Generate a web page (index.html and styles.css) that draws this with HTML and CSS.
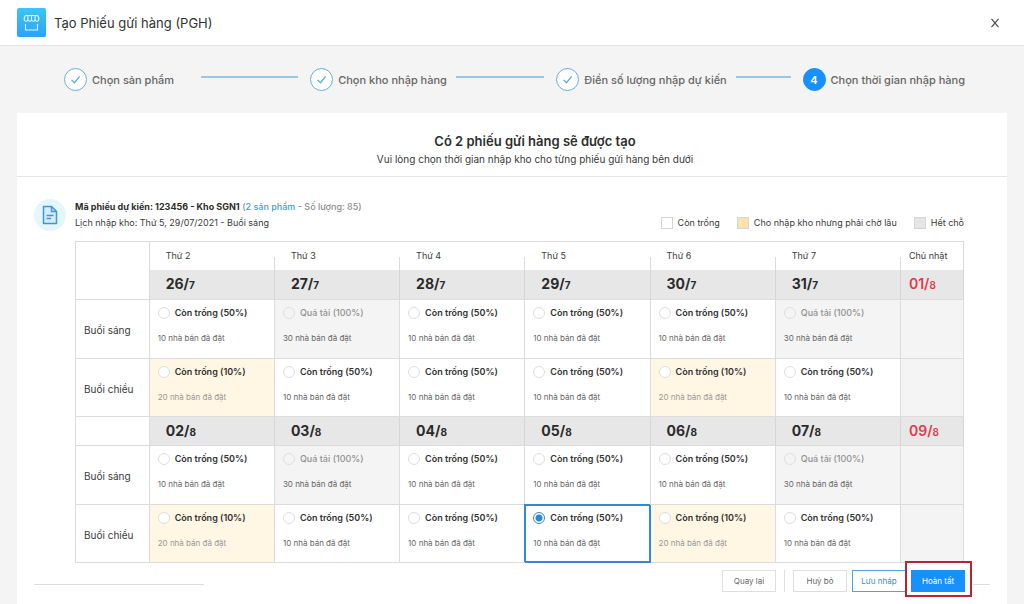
FILE: index.html
```html
<!DOCTYPE html>
<html lang="vi">
<head>
<meta charset="utf-8">
<meta name="viewport" content="width=device-width, initial-scale=1">
<title>Tạo Phiếu gửi hàng (PGH)</title>
<link rel="stylesheet" href="styles.css">
</head>
<body>
<header class="topbar">
  <svg class="logo" viewBox="0 0 29 29" aria-hidden="true">
    <defs><linearGradient id="logo-fill" x1="0" y1="0" x2="0" y2="1"><stop offset="0" stop-color="#3cc4f8"/><stop offset="1" stop-color="#2aa4f6"/></linearGradient></defs>
    <rect width="29" height="29" rx="2" fill="url(#logo-fill)"/>
    <g fill="none" stroke="#e4f8ff" stroke-width="1.1" stroke-linejoin="round">
      <path d="M8.400 7.500h12.200l1.200 2.500v1.600a1.850 2 0 0 1-3.650 0v-4M18.150 11.600a1.850 2 0 0 1-3.650 0v-4M14.500 11.600a1.850 2 0 0 1-3.650 0v-4M10.850 11.600a1.850 2 0 0 1-3.650 0v-1.600l1.200-2.500"/>
      <path d="M8.500 16v6h12v-6"/>
    </g>
  </svg>
  <h1 class="topbar-title">Tạo Phiếu gửi hàng (PGH)</h1>
  <button class="close" type="button" aria-label="Đóng">
    <svg viewBox="0 0 10 10" aria-hidden="true"><path d="M1.500 .8l7 8.400M8.500 .8l-7 8.400" fill="none" stroke="#444" stroke-width="1.100"/></svg>
  </button>
</header>

<ol class="steps">
  <li class="step step-first"><span class="step-mark"><svg viewBox="0 0 24 24"><path d="M7.500 12.400l3.300 3.300 6-7.200"/></svg></span><span>Chọn sản phẩm</span><i class="step-line"></i></li>
  <li class="step"><span class="step-mark"><svg viewBox="0 0 24 24"><path d="M7.500 12.400l3.300 3.300 6-7.200"/></svg></span><span>Chọn kho nhập hàng</span><i class="step-line"></i></li>
  <li class="step"><span class="step-mark"><svg viewBox="0 0 24 24"><path d="M7.500 12.400l3.300 3.300 6-7.200"/></svg></span><span>Điền số lượng nhập dự kiến</span><i class="step-line"></i></li>
  <li class="step step-current"><span class="step-mark">4</span><span>Chọn thời gian nhập hàng</span></li>
</ol>

<main class="card">
  <div class="card-head">
    <h2>Có 2 phiếu gửi hàng sẽ được tạo</h2>
    <p>Vui lòng chọn thời gian nhập kho cho từng phiếu gửi hàng bên dưới</p>
  </div>

  <section class="ticket">
    <div class="ticket-icon">
      <svg viewBox="0 0 16 20" aria-hidden="true"><g fill="none" stroke="#3d97dc" stroke-width="1.5" stroke-linejoin="round"><path d="M1.500 1.500h8l5 5v12h-13z" fill="#d3edfc"/><path d="M9.500 1.500v5h5M4.500 10.500h7M4.500 13.500h4.500"/></g></svg>
    </div>
    <div class="ticket-body">
      <div class="ticket-info">
        <div>
          <p><strong>Mã phiếu dự kiến: 123456 - Kho SGN1</strong> <span class="qty">(<a href="#">2 sản phẩm</a> - Số lượng: 85)</span></p>
          <p>Lịch nhập kho: Thứ 5, 29/07/2021 - Buổi sáng</p>
        </div>
        <ul class="legend">
          <li><i class="swatch"></i>Còn trống</li>
          <li><i class="swatch swatch-wait"></i>Cho nhập kho nhưng phải chờ lâu</li>
          <li><i class="swatch swatch-full"></i>Hết chỗ</li>
        </ul>
      </div>

      <table class="calendar">
        <colgroup><col class="col-label"><col span="6"><col class="col-sunday"></colgroup>
        <thead>
          <tr class="weekdays"><td rowspan="2"></td><th>Thứ 2</th><th>Thứ 3</th><th>Thứ 4</th><th>Thứ 5</th><th>Thứ 6</th><th>Thứ 7</th><th>Chủ nhật</th></tr>
          <tr class="dates"><th>26/<small>7</small></th><th>27/<small>7</small></th><th>28/<small>7</small></th><th>29/<small>7</small></th><th>30/<small>7</small></th><th>31/<small>7</small></th><th class="sunday">01/<small>8</small></th></tr>
        </thead>
        <tbody>
          <tr class="slots">
            <th>Buổi sáng</th>
            <td><label><input type="radio" name="slot"><b>Còn trống (50%)</b><span>10 nhà bán đã đặt</span></label></td>
            <td class="full"><label><input type="radio" name="slot" disabled><b>Quá tải (100%)</b><span>30 nhà bán đã đặt</span></label></td>
            <td><label><input type="radio" name="slot"><b>Còn trống (50%)</b><span>10 nhà bán đã đặt</span></label></td>
            <td><label><input type="radio" name="slot"><b>Còn trống (50%)</b><span>10 nhà bán đã đặt</span></label></td>
            <td><label><input type="radio" name="slot"><b>Còn trống (50%)</b><span>10 nhà bán đã đặt</span></label></td>
            <td class="full"><label><input type="radio" name="slot" disabled><b>Quá tải (100%)</b><span>30 nhà bán đã đặt</span></label></td>
            <td class="full"></td>
          </tr>
          <tr class="slots">
            <th>Buổi chiều</th>
            <td class="wait"><label><input type="radio" name="slot"><b>Còn trống (10%)</b><span>20 nhà bán đã đặt</span></label></td>
            <td><label><input type="radio" name="slot"><b>Còn trống (50%)</b><span>10 nhà bán đã đặt</span></label></td>
            <td><label><input type="radio" name="slot"><b>Còn trống (50%)</b><span>10 nhà bán đã đặt</span></label></td>
            <td><label><input type="radio" name="slot"><b>Còn trống (50%)</b><span>10 nhà bán đã đặt</span></label></td>
            <td class="wait"><label><input type="radio" name="slot"><b>Còn trống (10%)</b><span>20 nhà bán đã đặt</span></label></td>
            <td><label><input type="radio" name="slot"><b>Còn trống (50%)</b><span>10 nhà bán đã đặt</span></label></td>
            <td class="full"></td>
          </tr>
          <tr class="dates"><td></td><th>02/<small>8</small></th><th>03/<small>8</small></th><th>04/<small>8</small></th><th>05/<small>8</small></th><th>06/<small>8</small></th><th>07/<small>8</small></th><th class="sunday">09/<small>8</small></th></tr>
          <tr class="slots">
            <th>Buổi sáng</th>
            <td><label><input type="radio" name="slot"><b>Còn trống (50%)</b><span>10 nhà bán đã đặt</span></label></td>
            <td class="full"><label><input type="radio" name="slot" disabled><b>Quá tải (100%)</b><span>30 nhà bán đã đặt</span></label></td>
            <td><label><input type="radio" name="slot"><b>Còn trống (50%)</b><span>10 nhà bán đã đặt</span></label></td>
            <td><label><input type="radio" name="slot"><b>Còn trống (50%)</b><span>10 nhà bán đã đặt</span></label></td>
            <td><label><input type="radio" name="slot"><b>Còn trống (50%)</b><span>10 nhà bán đã đặt</span></label></td>
            <td class="full"><label><input type="radio" name="slot" disabled><b>Quá tải (100%)</b><span>30 nhà bán đã đặt</span></label></td>
            <td class="full"></td>
          </tr>
          <tr class="slots">
            <th>Buổi chiều</th>
            <td class="wait"><label><input type="radio" name="slot"><b>Còn trống (10%)</b><span>20 nhà bán đã đặt</span></label></td>
            <td><label><input type="radio" name="slot"><b>Còn trống (50%)</b><span>10 nhà bán đã đặt</span></label></td>
            <td><label><input type="radio" name="slot"><b>Còn trống (50%)</b><span>10 nhà bán đã đặt</span></label></td>
            <td class="selected"><label><input type="radio" name="slot" checked><b>Còn trống (50%)</b><span>10 nhà bán đã đặt</span></label></td>
            <td class="wait"><label><input type="radio" name="slot"><b>Còn trống (10%)</b><span>20 nhà bán đã đặt</span></label></td>
            <td><label><input type="radio" name="slot"><b>Còn trống (50%)</b><span>10 nhà bán đã đặt</span></label></td>
            <td class="full"></td>
          </tr>
        </tbody>
      </table>
    </div>
  </section>

  <footer class="actions">
    <i class="rule rule-left"></i>
    <button class="btn" type="button">Quay lại</button>
    <i class="divider"></i>
    <button class="btn" type="button">Huỷ bỏ</button>
    <button class="btn btn-outline" type="button">Lưu nháp</button>
    <span class="highlight"><button class="btn btn-primary" type="button">Hoàn tất</button></span>
    <i class="rule rule-right"></i>
  </footer>
</main>
</body>
</html>
```
FILE: styles.css
```css
* { box-sizing: border-box; }

body {
  margin: 0;
  min-height: 100vh;
  display: flex;
  flex-direction: column;
  background: #f4f4f4;
  color: #3a3a3a;
  font-family: Inter, "Liberation Sans", sans-serif;
  font-size: 9px;
  line-height: 16px;
}

h1, h2, p, ol, ul { margin: 0; padding: 0; }
ol, ul { list-style: none; }
button, input { font: inherit; margin: 0; }
svg { display: block; }

.topbar {
  display: flex;
  align-items: center;
  gap: 8px;
  height: 46px;
  padding: 0 24px 0 17px;
  background: #fff;
  border-bottom: 1px solid #e4e4e4;
}
.logo { width: 29px; height: 29px; }
.topbar-title { flex: 1; font-size: 13px; font-weight: 400; color: #333; }
.close { padding: 0; border: 0; background: none; cursor: pointer; }
.close svg { width: 10px; height: 10px; }

.steps {
  display: flex;
  height: 67px;
  padding: 0 59px 0 64px;
  align-items: center;
}
.step {
  flex: 1;
  display: flex;
  align-items: center;
  gap: 5px;
  font-size: 11px;
  font-weight: 500;
  color: #666;
  white-space: nowrap;
}
.step-current { flex: none; }
.step-mark {
  flex: none;
  display: grid;
  place-items: center;
  width: 23px;
  height: 23px;
  border: 1px solid #69aedb;
  border-radius: 50%;
  background: #fff;
}
.step-mark svg { width: 21px; height: 21px; fill: none; stroke: #5fa9da; stroke-width: 1.5; }
.step-current .step-mark { background: #1890ff; border-color: #1890ff; color: #fff; font-weight: 600; }
.step-line { flex: 1; height: 2px; margin: 0 12px 5px 4px; background: #98c8e4; }
.step-first .step-line { margin-left: 22px; }

.card {
  flex: 1;
  margin: 0 17px;
  background: #fff;
}
.card-head {
  height: 64px;
  padding: 19px 0 0 46px;
  border-bottom: 1px solid #e6e6e6;
  text-align: center;
}
.card-head h2 { font-size: 13px; line-height: 18px; font-weight: 600; color: #2d2d2d; }
.card-head p { font-size: 10px; line-height: 18px; }

.ticket { display: flex; gap: 9px; padding: 22px 43px 0 17px; }
.ticket-icon {
  flex: none;
  display: grid;
  place-items: center;
  width: 32px;
  height: 32px;
  border-radius: 50%;
  background: #e5f6fe;
}
.ticket-icon svg { width: 16px; height: 20px; }
.ticket-body { flex: 1; }
.ticket-info {
  display: flex;
  justify-content: space-between;
  align-items: flex-end;
  height: 32px;
}
.ticket-info strong { font-weight: 700; color: #2d2d2d; }
.qty { color: #8c8c8c; font-weight: 500; }
.qty a { color: #3d9be0; text-decoration: none; }
.legend { display: flex; gap: 17px; }
.legend li { display: flex; align-items: center; gap: 5px; }
.swatch { width: 12px; height: 12px; border: 1px solid #d5d5d5; background: #fff; }
.swatch-wait { background: #fde2ae; }
.swatch-full { background: #e5e5e5; }

.calendar {
  width: 100%;
  margin-top: 10px;
  table-layout: fixed;
  border-spacing: 0;
  border: 1px solid #dcdcdc;
  border-width: 1px 0 0 1px;
}
.col-label { width: 8.3%; }
.col-sunday { width: 7.1%; }
.calendar th, .calendar td {
  padding: 0;
  border: 1px solid #dcdcdc;
  border-width: 0 1px 1px 0;
  text-align: left;
  font-weight: 400;
}
.calendar .weekdays th {
  height: 28px;
  padding-left: 16px;
  border-width: 0;
  background: linear-gradient(#dcdcdc, #dcdcdc) right bottom / 1px 13px no-repeat;
}
.calendar .weekdays th:last-child { background-size: 1px 28px; }
.calendar .dates th {
  height: 30px;
  padding-left: 16px;
  background: #e7e7e7;
  border-right-color: #d6d6d6;
  font-size: 14px;
  font-weight: 700;
  color: #2b2b2b;
}
.calendar tbody .dates th { height: 29px; }
.dates small { font-size: 10px; }
.calendar .weekdays th:last-child, .calendar .dates .sunday { padding-left: 8px; }
.calendar .dates .sunday { color: #e23b48; font-weight: 600; }
.calendar .slots > * { height: 58px; }
.calendar .slots:first-child > *, .calendar .dates + .slots > * { height: 59px; }
.calendar .slots th { padding: 2px 0 0 8px; font-size: 10px; }
.calendar .slots td { padding: 5px 8px; vertical-align: top; }
.calendar .full { background: #f4f4f4; }
.calendar .wait { background: #fff6e3; }
.calendar .selected { box-shadow: -1px -1px 0 #3389d4, inset 0 0 0 1px #3389d4; border-color: #3389d4; }

.slots label {
  display: grid;
  grid-template-columns: 12px 1fr;
  column-gap: 5px;
  row-gap: 9px;
  align-items: center;
  white-space: nowrap;
}
.slots b { font-weight: 600; color: #333; }
.slots span { grid-column: 1 / -1; font-size: 8px; color: #666; }
.slots .wait span { color: #999; }
.slots .full b { font-weight: 500; color: #929292; }
.slots input {
  appearance: none;
  width: 12px;
  height: 12px;
  border: 1px solid #dedede;
  border-radius: 50%;
  background: #fff;
}
.slots input:disabled { background: #f4f4f4; }
.slots input:checked {
  border-color: #3389d4;
  background: radial-gradient(circle, #2b87dc 3px, #fff 4px);
}

.actions {
  display: flex;
  align-items: center;
  padding: 7px 17px 12px;
}
.rule { height: 1px; margin-top: 6px; background: #dedede; }
.rule-left { width: 170px; margin-right: auto; }
.rule-right { width: 17px; margin-left: 8px; }
.btn {
  width: 54px;
  height: 22px;
  padding: 0;
  border: 1px solid #dfdfdf;
  background: #fff;
  color: #666;
  font-size: 8px;
  white-space: nowrap;
}
.divider { width: 1px; height: 22px; margin: 0 8px; background: #dedede; }
.btn-outline { margin-left: 5px; border-color: #4da4e0; color: #2d8fd6; }
.btn-primary { display: block; border-color: #1890ff; background: #1890ff; color: #fff; }
.highlight { position: relative; margin-left: 5px; }
.highlight::before {
  content: "";
  position: absolute;
  inset: -9px -7px -5px -6px;
  border: 2px solid #b5262f;
  background: #fff;
}
.highlight .btn { position: relative; }
```
